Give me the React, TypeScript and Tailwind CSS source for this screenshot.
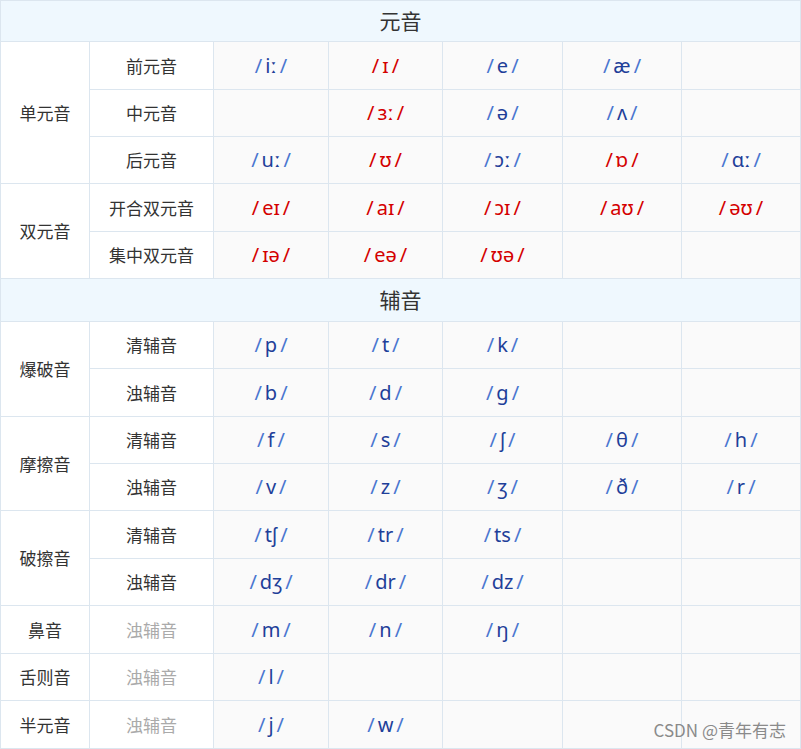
type C = { t: string; red?: boolean } | null;
const Cell = ({ c }: { c: C }) => (
  <div className="border-r border-b border-[#dce6ef] bg-[#fafafa] flex items-center justify-center text-[20px] font-normal" style={{ fontFamily: '"Noto Sans", "DejaVu Sans", sans-serif' }}>
    {c && (
      <span className={c.red ? "text-[#d40000]" : "text-[#1f3f99]"}>
        <span className={c.red ? "" : "text-[#4a76d0]"}>/</span>
        <span className="px-[3px]">{c.t}</span>
        <span className={c.red ? "" : "text-[#4a76d0]"}>/</span>
      </span>
    )}
  </div>
);
const L = ({ t, span, grey }: { t: string; span?: number; grey?: boolean }) => (
  <div
    className={`border-r border-b border-[#dce6ef] bg-white flex items-center justify-center text-[17px] ${grey ? "text-[#aaaaaa]" : "text-[#333]"}`}
    style={span ? { gridRow: `span ${span}` } : undefined}
  >
    {t}
  </div>
);
const H = ({ t }: { t: string }) => (
  <div className="col-span-7 border-r border-b border-[#dce6ef] bg-[#eff8fe] flex items-center justify-center text-[21px] text-[#333]">{t}</div>
);
const b = (t: string): C => ({ t });
const r = (t: string): C => ({ t, red: true });
const Row = ({ cs }: { cs: C[] }) => <>{cs.map((c, i) => <Cell key={i} c={c} />)}</>;

export default function App() {
  return (
    <div className="relative w-[801px] h-[749px] overflow-hidden" style={{ fontFamily: '"Noto Sans CJK SC", sans-serif' }}>
      <div
        className="grid border-l border-t border-[#dce6ef]"
        style={{
          gridTemplateColumns: "89px 124px 115px 114px 120px 119px 119px",
          gridTemplateRows: "41px 48px 47px 47px 48px 47px 43px 47px 48px 47px 47px 48px 47px 48px 47px 48px",
        }}
      >
        <H t="元音" />
        <L t="单元音" span={3} />
        <L t="前元音" />
        <Row cs={[b("iː"), r("ɪ"), b("e"), b("æ"), null]} />
        <L t="中元音" />
        <Row cs={[null, r("ɜː"), b("ə"), b("ʌ"), null]} />
        <L t="后元音" />
        <Row cs={[b("uː"), r("ʊ"), b("ɔː"), r("ɒ"), b("ɑː")]} />
        <L t="双元音" span={2} />
        <L t="开合双元音" />
        <Row cs={[r("eɪ"), r("aɪ"), r("ɔɪ"), r("aʊ"), r("əʊ")]} />
        <L t="集中双元音" />
        <Row cs={[r("ɪə"), r("eə"), r("ʊə"), null, null]} />
        <H t="辅音" />
        <L t="爆破音" span={2} />
        <L t="清辅音" />
        <Row cs={[b("p"), b("t"), b("k"), null, null]} />
        <L t="浊辅音" />
        <Row cs={[b("b"), b("d"), b("ɡ"), null, null]} />
        <L t="摩擦音" span={2} />
        <L t="清辅音" />
        <Row cs={[b("f"), b("s"), b("ʃ"), b("θ"), b("h")]} />
        <L t="浊辅音" />
        <Row cs={[b("v"), b("z"), b("ʒ"), b("ð"), b("r")]} />
        <L t="破擦音" span={2} />
        <L t="清辅音" />
        <Row cs={[b("tʃ"), b("tr"), b("ts"), null, null]} />
        <L t="浊辅音" />
        <Row cs={[b("dʒ"), b("dr"), b("dz"), null, null]} />
        <L t="鼻音" />
        <L t="浊辅音" grey />
        <Row cs={[b("m"), b("n"), b("ŋ"), null, null]} />
        <L t="舌则音" />
        <L t="浊辅音" grey />
        <Row cs={[b("l"), null, null, null, null]} />
        <L t="半元音" />
        <L t="浊辅音" grey />
        <Row cs={[b("j"), b("w"), null, null, null]} />
      </div>
      <div className="absolute right-[15px] bottom-[7px] text-[17px] text-[#8a8a8a]">CSDN @青年有志</div>
    </div>
  );
}
